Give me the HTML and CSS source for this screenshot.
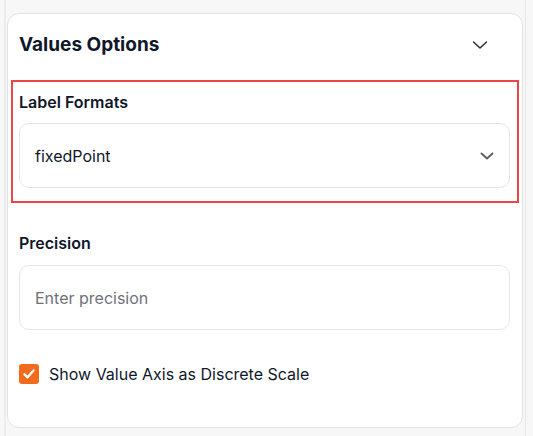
FILE: index.html
```html
<!DOCTYPE html>
<html lang="en">
<head>
<meta charset="utf-8">
<link rel="stylesheet" href="styles.css">
</head>
<body>
<div class="frame">
  <section class="card">
    <header class="card-header">
      <h2 class="card-title">Values Options</h2>
      <svg class="collapse-icon" width="16" height="16" viewBox="0 0 16 16" fill="none">
        <path d="M1.5 5L8 11L14.5 5" stroke="#1f2937" stroke-width="1.4" stroke-linecap="round" stroke-linejoin="round"/>
      </svg>
    </header>

    <div class="highlight">
      <label class="field-label">Label Formats</label>
      <div class="select">
        <span class="select-value">fixedPoint</span>
        <svg class="select-icon" width="16" height="16" viewBox="0 0 16 16" fill="none">
          <path d="M2.5 5.5L8 10.5L13.5 5.5" stroke="#5f6368" stroke-width="2" stroke-linecap="round" stroke-linejoin="round"/>
        </svg>
      </div>
    </div>

    <div class="field">
      <label class="field-label">Precision</label>
      <div class="input"><span class="placeholder">Enter precision</span></div>
    </div>

    <div class="check-row">
      <span class="checkbox">
        <svg width="14" height="14" viewBox="0 0 14 14" fill="none">
          <path d="M2.5 7.3L5.6 10.3L11.5 3.5" stroke="#fff" stroke-width="2.4" stroke-linecap="round" stroke-linejoin="round"/>
        </svg>
      </span>
      <span class="check-label">Show Value Axis as Discrete Scale</span>
    </div>
  </section>
</div>
</body>
</html>
```

FILE: styles.css
```css
* { box-sizing: border-box; }

html, body {
  margin: 0;
  padding: 0;
}

body {
  background: #f7f7f7;
  font-family: Inter, "Noto Sans", sans-serif;
  color: #0f172a;
  width: 533px;
  height: 436px;
  overflow: hidden;
}

.frame {
  margin-left: 4px;
  width: 522px;
  height: 436px;
  border-left: 2px solid #ececec;
  border-right: 1px solid #e6e6e6;
  padding-top: 13px;
  padding-left: 1px;
}

.card {
  width: 516px;
  height: 415px;
  background: #ffffff;
  border: 1px solid #e2e2e2;
  border-radius: 12px;
  padding: 0 12px 0 11px;
}

.card-header {
  display: flex;
  align-items: center;
  justify-content: space-between;
  height: 28px;
  margin-top: 17px;
}

.card-title {
  margin: 0;
  font-size: 19px;
  font-weight: 700;
  line-height: 28px;
}

.collapse-icon {
  margin-right: 22px;
}

.highlight {
  margin: 21px -9px 0 -8px;
  border: 2px solid #ef4444;
  padding: 8px 7px 13px 6px;
}

.field-label {
  display: block;
  font-size: 16px;
  font-weight: 600;
  line-height: 24px;
}

.select,
.input {
  display: flex;
  align-items: center;
  height: 65px;
  border: 1px solid #e5e5e5;
  border-radius: 10px;
  padding: 0 14px 0 15px;
  margin-top: 9px;
}

.select {
  justify-content: space-between;
}

.select-value {
  font-size: 16px;
  line-height: 24px;
  color: #0f172a;
}

.placeholder {
  font-size: 16px;
  line-height: 24px;
  color: #71717a;
}

.field {
  margin-top: 28px;
}

.field .input {
  margin-top: 10px;
}

.check-row {
  display: flex;
  align-items: center;
  gap: 10px;
  margin-top: 32px;
}

.checkbox {
  width: 20px;
  height: 20px;
  border-radius: 3px;
  background: #f26b1d;
  display: flex;
  align-items: center;
  justify-content: center;
}

.check-label {
  font-size: 16px;
  line-height: 24px;
  color: #0f172a;
}
```
